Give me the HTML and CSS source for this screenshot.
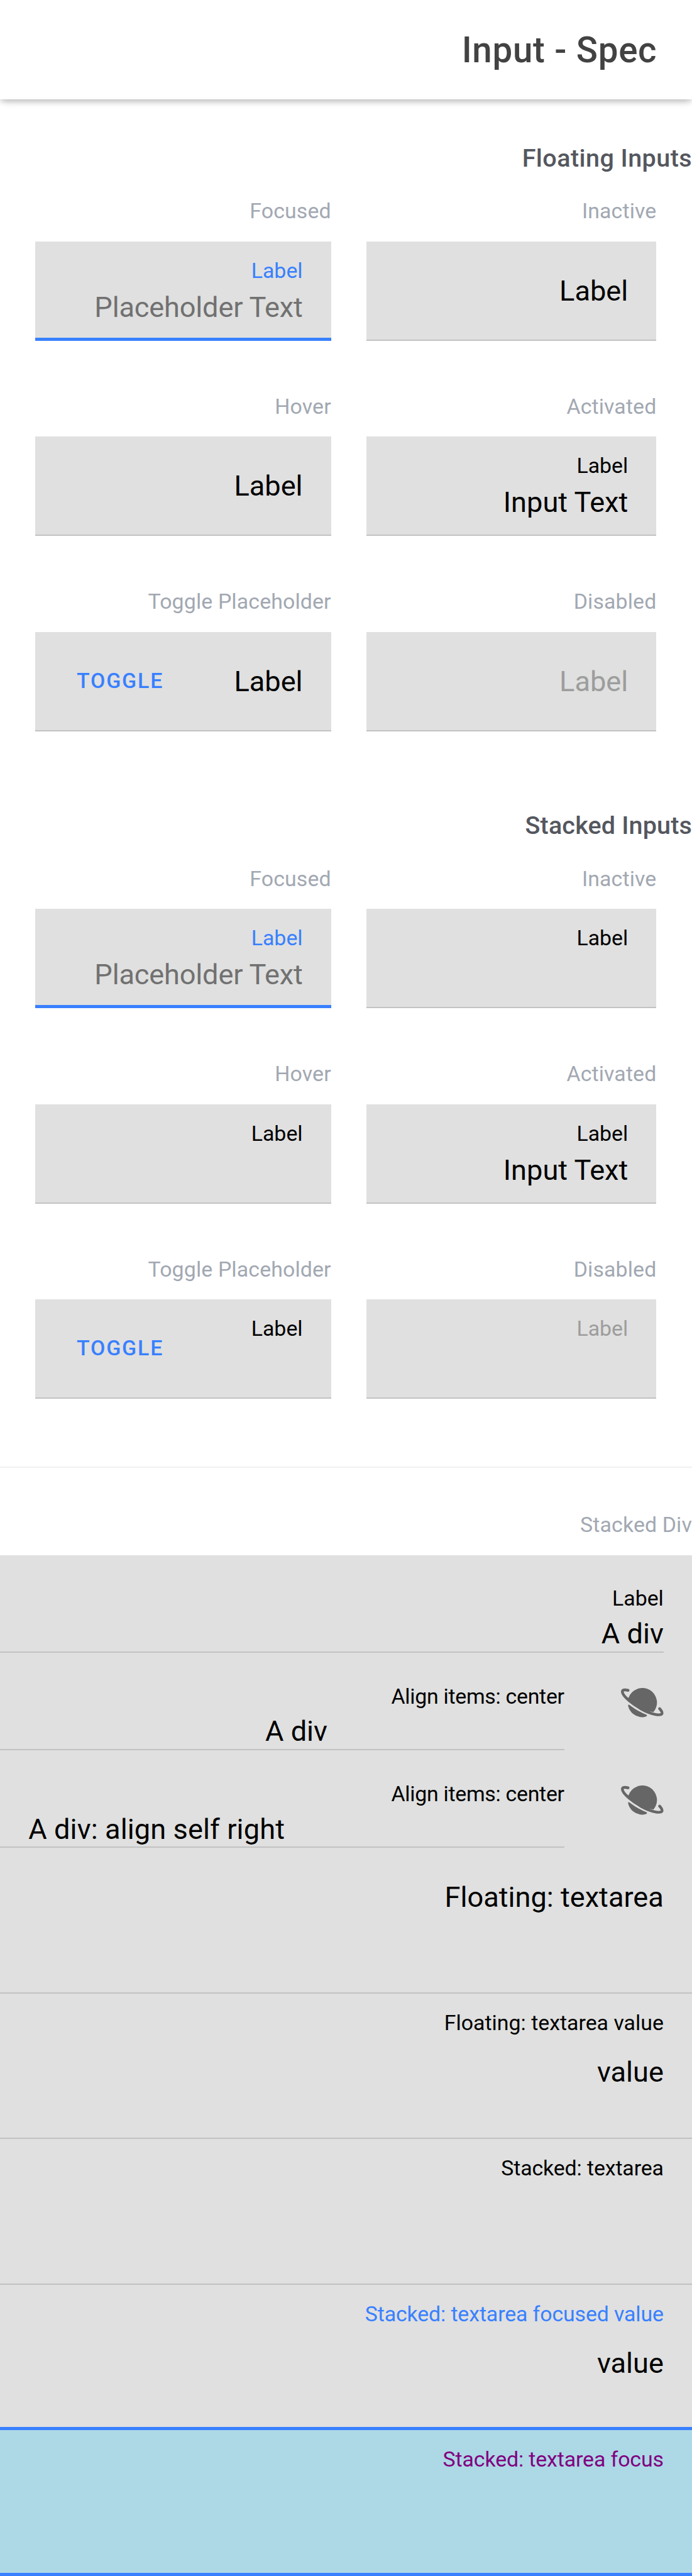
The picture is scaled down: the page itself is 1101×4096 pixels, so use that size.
FILE: index.html
```html
<!DOCTYPE html>
<html lang="en">
<head>
<meta charset="utf-8">
<title>Input - Spec</title>
<link rel="stylesheet" href="styles.css">
</head>
<body>
<svg class="sprite" aria-hidden="true">
  <symbol id="planet" viewBox="90 63 216 216">
    <path d="M129 147A74 74 0 1 1 255 220L205 212L120 152Z"/>
    <path d="M126 187Q127 180 133 184Q173 215 219 234Q226 238 218 242Q206 246 199 246A74 74 0 0 1 126 187Z"/>
    <path d="M126 110C108 106 97 107 97 117C97 138 150 182 205 211C250 233 290 240 298 229C302 221 293 211 286 203" fill="none" stroke="currentColor" stroke-width="14" stroke-linecap="round"/>
  </symbol>
</svg>
<header class="header"><h1 class="title">Input - Spec</h1></header>
<main>
  <section class="section floating">
    <h2 class="heading">Floating Inputs</h2>
    <div class="grid">
      <div><p class="caption">Focused</p><div class="field focused"><span class="label">Label</span><span class="value placeholder">Placeholder Text</span></div></div>
      <div><p class="caption">Inactive</p><div class="field"><span class="resting">Label</span></div></div>
      <div><p class="caption">Hover</p><div class="field"><span class="resting">Label</span></div></div>
      <div><p class="caption">Activated</p><div class="field"><span class="label">Label</span><span class="value">Input Text</span></div></div>
      <div><p class="caption">Toggle Placeholder</p><div class="field with-button"><span class="toggle">Toggle</span><span class="resting">Label</span></div></div>
      <div><p class="caption">Disabled</p><div class="field disabled"><span class="resting">Label</span></div></div>
    </div>
  </section>
  <section class="section stacked">
    <h2 class="heading">Stacked Inputs</h2>
    <div class="grid">
      <div><p class="caption">Focused</p><div class="field focused"><span class="label">Label</span><span class="value placeholder">Placeholder Text</span></div></div>
      <div><p class="caption">Inactive</p><div class="field"><span class="label">Label</span></div></div>
      <div><p class="caption">Hover</p><div class="field"><span class="label">Label</span></div></div>
      <div><p class="caption">Activated</p><div class="field"><span class="label">Label</span><span class="value">Input Text</span></div></div>
      <div><p class="caption">Toggle Placeholder</p><div class="field with-button"><span class="toggle">Toggle</span><span class="label">Label</span></div></div>
      <div><p class="caption">Disabled</p><div class="field disabled"><span class="label">Label</span></div></div>
    </div>
  </section>
  <div class="divider"></div>
  <p class="caption list-caption">Stacked Div</p>
  <div class="list">
    <div class="row"><div class="row-inner"><span class="label">Label</span><span class="value">A div</span></div></div>
    <div class="row"><div class="row-inner"><span class="label tight">Align items: center</span><span class="value center">A div</span></div><svg class="icon"><use href="#planet"/></svg></div>
    <div class="row"><div class="row-inner"><span class="label tight">Align items: center</span><span class="value start">A div: align self right</span></div><svg class="icon"><use href="#planet"/></svg></div>
    <div class="area"><span class="resting">Floating: textarea</span></div>
    <div class="area"><span class="label">Floating: textarea value</span><span class="value">value</span></div>
    <div class="area"><span class="label snug">Stacked: textarea</span></div>
    <div class="area focused"><span class="label snug">Stacked: textarea focused value</span><span class="value">value</span></div>
    <div class="area focused custom"><span class="label snug">Stacked: textarea focus</span></div>
  </div>
</main>
</body>
</html>
```

FILE: styles.css
```css
/* 1rem equals ten layout units */
html { font-size: 28.229px; }
* { box-sizing: border-box; }
body {
  margin: 0;
  background: #fff;
  color: #000;
  font-family: Roboto, sans-serif;
  font-size: 1.6rem;
  text-align: right;
  overflow-x: hidden;
}
h1, h2, p { margin: 0; }
.sprite { display: none; }

.header {
  height: 5.6rem;
  padding: 0 2rem;
  background: #fff;
  box-shadow: 0 .2rem .4rem -.1rem rgba(0, 0, 0, .2), 0 .1rem .3rem rgba(0, 0, 0, .12);
}
.title {
  font-size: 2rem;
  font-weight: 500;
  line-height: 5.71rem;
  letter-spacing: .0125em;
  margin-right: -.0125em;
  color: #424242;
}

.section { padding-top: 2.3rem; }
.section.stacked { padding-top: 4.3rem; }
.heading {
  font-size: 1.4rem;
  font-weight: 500;
  line-height: 2.06rem;
  margin-bottom: 1.14rem;
  color: #54575e;
}
.floating .heading { letter-spacing: .43px; }
.stacked .heading { letter-spacing: .15px; }
.grid {
  display: grid;
  grid-template-columns: 16.66rem 16.34rem;
  column-gap: 2rem;
  row-gap: 2.9rem;
  padding: 0 2rem;
}
.caption {
  font-size: 1.2rem;
  line-height: 1.6rem;
  letter-spacing: .13px;
  margin-bottom: .9rem;
  color: #a2a8b2;
}

.label { font-size: 1.2rem; line-height: 1.6rem; }
.label.tight { letter-spacing: -.28px; }
.label.snug { letter-spacing: -.12px; }
.value { font-size: 1.6rem; line-height: 2rem; }
.resting { font-size: 1.6rem; line-height: 5.54rem; margin-top: -.82rem; }

.field, .area {
  display: flex;
  flex-direction: column;
  padding: .85rem 1.6rem 0;
  background: #e0e0e0;
  border-bottom: .1rem solid #c2c2c2;
}
.field { height: 5.6rem; }
.field .value { margin-top: .27rem; }
.field.focused, .area.focused { border-bottom: .2rem solid #3880ff; }
.focused .label { color: #3880ff; }
.value.placeholder { color: #717171; letter-spacing: -.18px; }
.disabled .label, .disabled .resting { color: #9d9d9d; }
.field.with-button {
  flex-direction: row;
  justify-content: space-between;
  align-items: flex-start;
}
.toggle {
  margin-left: .72rem;
  margin-top: 1.09rem;
  font-size: 1.2rem;
  font-weight: 500;
  line-height: 1.6rem;
  letter-spacing: .055em;
  text-transform: uppercase;
  color: #3880ff;
}

.divider { height: .1rem; margin-top: 3.8rem; background: #f0f0f0; }
.list-caption { padding-top: 2.39rem; margin-bottom: .91rem; }

.list { background: #e0e0e0; }
.row { display: flex; height: 5.5rem; padding-right: 1.6rem; }
.row-inner {
  flex: 1;
  display: flex;
  flex-direction: column;
  padding: 1.65rem 0 0 1.6rem;
  border-bottom: .1rem solid #c2c2c2;
}
.row .value { margin-top: .2rem; }
.center { align-self: center; }
.start { align-self: flex-start; letter-spacing: .1px; }
.icon {
  width: 2.4rem;
  height: 2.4rem;
  margin: 1.6rem 0 0 3.2rem;
  color: #666;
  fill: currentColor;
}
.area { height: 8.2rem; }
.area .value { margin-top: 1rem; }
.area.custom { background: #add8e6; }
.area.custom .label { color: #800080; }
```
